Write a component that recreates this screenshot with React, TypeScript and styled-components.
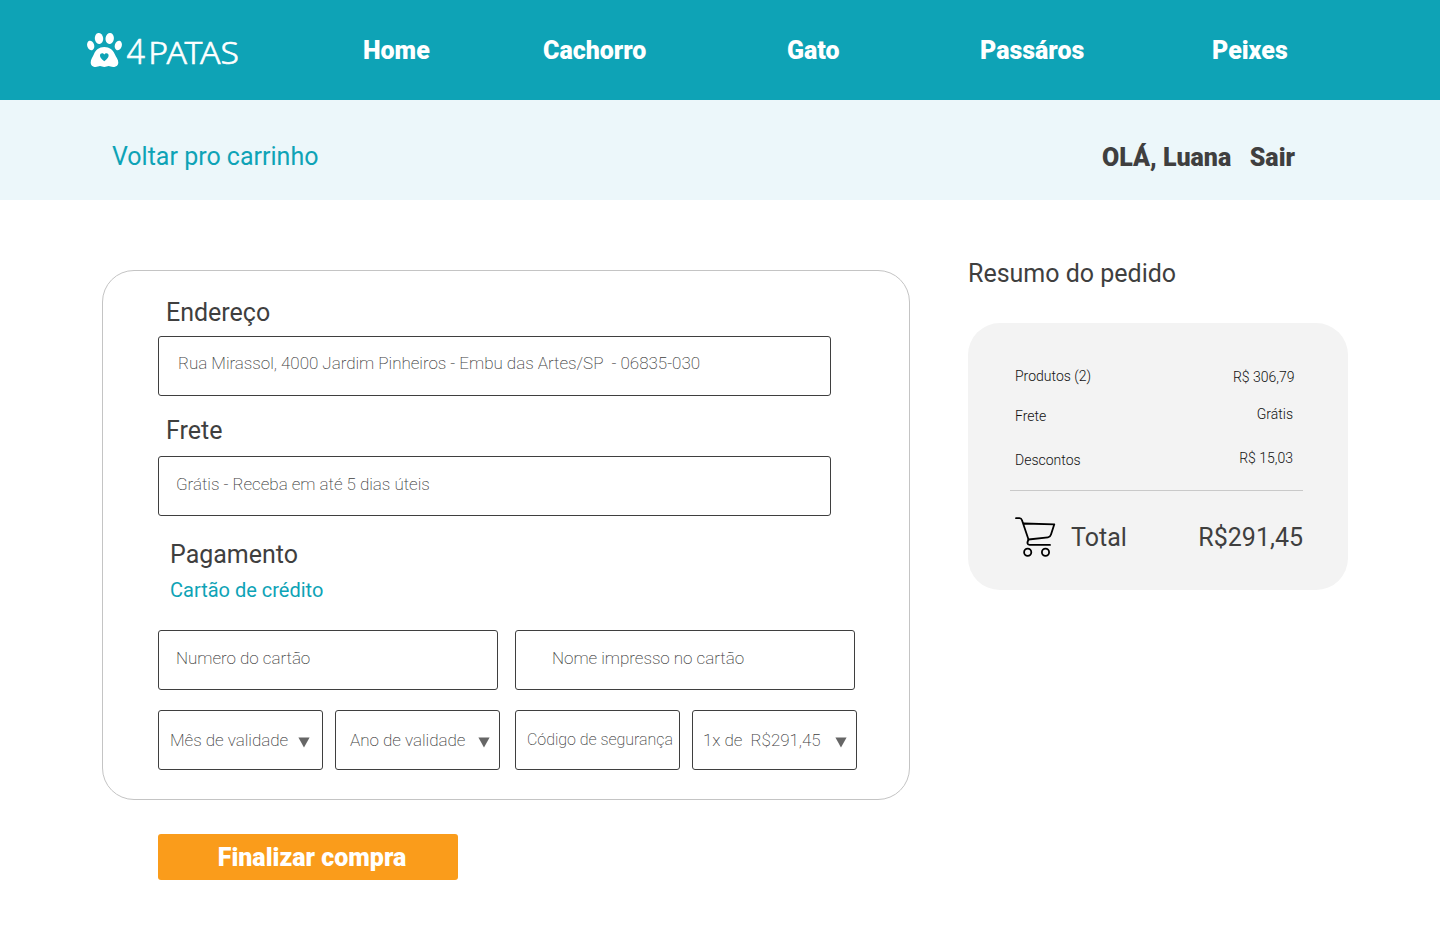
import React from "react";
import styled, { createGlobalStyle } from "styled-components";

const GlobalStyle = createGlobalStyle`
  * { box-sizing: border-box; }
  body {
    margin: 0;
    background: #fff;
    color: #3f3f3f;
    font-family: Roboto, "Liberation Sans", sans-serif;
  }
`;

const Header = styled.header`
  height: 100px;
  padding-left: 86px;
  display: flex;
  align-items: center;
  background: #0ea3b6;
`;

const LogoSvg = styled.svg`
  display: block;
  width: 154px;
  height: 40px;
  flex: none;
  overflow: visible;
`;

const Nav = styled.nav`
  margin-left: 123px;
  padding-top: 2px;
  display: grid;
  grid-template-columns: 180px 244px 193px 232px auto;
`;

const NavLink = styled.a`
  color: #fff;
  font-size: 25px;
  line-height: 30px;
  font-weight: 900;
`;

const SubHeader = styled.div`
  height: 100px;
  padding: 14px 145px 0 112px;
  display: flex;
  align-items: center;
  background: #ecf7fa;
`;

const BackLink = styled.a`
  margin-right: auto;
  color: #0ea3b6;
  font-size: 25px;
  line-height: 30px;
`;

const UserText = styled.span`
  padding-top: 2px;
  margin-left: 18.5px;
  font-size: 25px;
  line-height: 30px;
  font-weight: 900;
`;

const Main = styled.main`
  display: flex;
  align-items: flex-start;
  padding-left: 102px;
`;

const Checkout = styled.section`
  width: 808px;
  margin-top: 70px;
`;

const FormCard = styled.form`
  height: 530px;
  padding: 27px 0 0 55px;
  border: 1px solid #c4c4c4;
  border-radius: 32px;
`;

const Heading = styled.h2<{ $top?: number; $left?: number }>`
  margin: ${(p) => p.$top ?? 0}px 0 0 ${(p) => p.$left ?? 0}px;
  font-size: 25px;
  line-height: 30px;
  font-weight: 400;
`;

const Method = styled.p`
  margin: 8px 0 28px 12px;
  color: #0ea3b6;
  font-size: 20px;
  line-height: 24px;
`;

const FieldRow = styled.div<{ $columns: string }>`
  display: grid;
  grid-template-columns: ${(p) => p.$columns};
  margin-bottom: 20px;
`;

const Field = styled.div<{ $top?: number; $indent: number; $rise?: number; $size?: number }>`
  width: ${(p) => (p.$top === undefined ? "auto" : "673px")};
  height: 60px;
  margin-top: ${(p) => p.$top ?? 0}px;
  padding: 0 0 ${(p) => p.$rise ?? 0}px ${(p) => p.$indent}px;
  display: flex;
  align-items: center;
  border: 1px solid #3f3f3f;
  border-radius: 3px;
  font-size: ${(p) => p.$size ?? 17}px;
  line-height: 20px;
  font-weight: 200;
  letter-spacing: -0.035px;
  white-space: pre;
`;

const Arrow = styled.svg<{ $right: number }>`
  width: 12px;
  height: 11px;
  margin: 4px ${(p) => p.$right}px 0 auto;
  flex: none;
  fill: #666;
`;

const SubmitButton = styled.button`
  display: block;
  width: 300px;
  height: 46px;
  margin: 34px 0 0 56px;
  padding: 2px 0 0 8px;
  border: 0;
  border-radius: 3px;
  background: #fa9c1b;
  color: #fff;
  font: 900 25px/30px Roboto, "Liberation Sans", sans-serif;
`;

const Summary = styled.aside`
  width: 380px;
  margin: 59px 0 0 58px;
`;

const SummaryCard = styled.div`
  height: 267px;
  margin-top: 34px;
  padding: 45px 45px 0 42px;
  border-radius: 32px;
  background: #f3f3f3;
`;

const SummaryRow = styled.div<{ $height: number }>`
  height: ${(p) => p.$height}px;
  padding-left: 5px;
  display: flex;
  justify-content: space-between;
  align-items: flex-start;
  color: #111;
  font-size: 14px;
  line-height: 16px;
  font-weight: 300;
`;

const Amount = styled.span<{ $shift: number; $inset: number }>`
  margin: ${(p) => p.$shift}px ${(p) => p.$inset}px 0 0;
`;

const TotalRow = styled.div`
  padding: 25px 0 0 4px;
  display: flex;
  align-items: center;
  border-top: 1px solid #c9c9c9;
  font-size: 25px;
  line-height: 30px;
`;

const CartSvg = styled.svg`
  width: 42px;
  height: 42px;
  margin-right: 15px;
`;

const TotalLabel = styled.span`
  padding-top: 2px;
`;

const TotalValue = styled(TotalLabel)`
  margin-left: auto;
`;

const Logo = () => (
  <LogoSvg viewBox="0 0 154 40" fill="#fff" aria-label="4 Patas">
    <ellipse cx="4.7" cy="15.5" rx="3.5" ry="4.9" transform="rotate(-17 4.7 15.5)" />
    <ellipse cx="13" cy="8.5" rx="4.2" ry="5.5" transform="rotate(-7 13 8.5)" />
    <ellipse cx="23.7" cy="8.5" rx="4.2" ry="5.5" transform="rotate(7 23.7 8.5)" />
    <ellipse cx="32.3" cy="15.5" rx="3.5" ry="4.9" transform="rotate(17 32.3 15.5)" />
    <path
      fillRule="evenodd"
      d="M18.3 17C13 17 9.7 20 8 24C6.7 27 4.7 29.5 4.7 32.5C4.7 35.5 7 37 9.5 37C11.5 37 12.7 36 14 36C15.5 36 16.5 37 18.3 37C20.1 37 21.2 36 22.7 36C24 36 25.2 37 27.2 37C30 37 32.3 35.5 32.3 32.5C32.3 29.5 30 27 28.7 24C27 20 23.6 17 18.3 17ZM18.3 31.2C15.5 29 14 27.4 14 25.4C14 23 17 22.2 18.3 24.5C19.6 22.2 22.6 23 22.6 25.4C22.6 27.4 21 29 18.3 31.2Z"
    />
    <g fontFamily="'Noto Sans', sans-serif" fontWeight="300" stroke="#fff" strokeWidth="0.6">
      <text x="40.4" y="33.5" fontSize="35.5" textLength="18.5" lengthAdjust="spacingAndGlyphs">4</text>
      <text x="62.3" y="33.5" fontSize="30.5" textLength="90.5" lengthAdjust="spacingAndGlyphs">PATAS</text>
    </g>
  </LogoSvg>
);

const CartIcon = () => (
  <CartSvg viewBox="0 0 42 42" fill="none" stroke="#000" strokeWidth="1.8" strokeLinecap="round" strokeLinejoin="round">
    <path d="M2 2.2H5.5Q7.3 2.2 8 4.2L14.5 23.5L34 21.3Q36.3 21 37 18.6L40.3 8.3L9.8 7.5" />
    <path d="M14.5 23.5Q12 28.7 15.5 28.9H36" />
    <circle cx="13.7" cy="36.3" r="3.6" />
    <circle cx="31.5" cy="36.3" r="3.6" />
  </CartSvg>
);

const DropArrow = ({ right }: { right: number }) => (
  <Arrow viewBox="0 0 12 11" $right={right}>
    <path d="M0.4 0.5H11.6L6 10.5Z" />
  </Arrow>
);

export default function App() {
  return (
    <>
      <GlobalStyle />
      <Header>
        <Logo />
        <Nav>
          {["Home", "Cachorro", "Gato", "Passáros", "Peixes"].map((name) => (
            <NavLink key={name}>{name}</NavLink>
          ))}
        </Nav>
      </Header>
      <SubHeader>
        <BackLink>Voltar pro carrinho</BackLink>
        <UserText>OLÁ, Luana</UserText>
        <UserText>Sair</UserText>
      </SubHeader>
      <Main>
        <Checkout>
          <FormCard>
            <Heading $left={8}>Endereço</Heading>
            <Field $top={8} $indent={19} $rise={6}>Rua Mirassol, 4000 Jardim Pinheiros - Embu das Artes/SP  - 06835-030</Field>
            <Heading $top={20} $left={8}>Frete</Heading>
            <Field $top={10} $indent={17} $rise={4}>Grátis - Receba em até 5 dias úteis</Field>
            <Heading $top={24} $left={12}>Pagamento</Heading>
            <Method>Cartão de crédito</Method>
            <FieldRow $columns="340px 17px 340px">
              <Field $indent={17} $rise={4}>Numero do cartão</Field>
              <span />
              <Field $indent={36} $rise={4}>Nome impresso no cartão</Field>
            </FieldRow>
            <FieldRow $columns="165px 12px 165px 15px 165px 12px 165px">
              <Field $indent={11}>Mês de validade<DropArrow right={12.5} /></Field>
              <span />
              <Field $indent={14}>Ano de validade<DropArrow right={9.5} /></Field>
              <span />
              <Field $indent={11} $size={16}>Código de segurança</Field>
              <span />
              <Field $indent={10}>1x de  R$291,45<DropArrow right={9.5} /></Field>
            </FieldRow>
          </FormCard>
          <SubmitButton type="button">Finalizar compra</SubmitButton>
        </Checkout>
        <Summary>
          <Heading>Resumo do pedido</Heading>
          <SummaryCard>
            <SummaryRow $height={40}>
              Produtos (2)<Amount $shift={1} $inset={8.5}>R$ 306,79</Amount>
            </SummaryRow>
            <SummaryRow $height={44}>
              Frete<Amount $shift={-2} $inset={10}>Grátis</Amount>
            </SummaryRow>
            <SummaryRow $height={38}>
              Descontos<Amount $shift={-2} $inset={10}>R$ 15,03</Amount>
            </SummaryRow>
            <TotalRow>
              <CartIcon />
              <TotalLabel>Total</TotalLabel>
              <TotalValue>R$291,45</TotalValue>
            </TotalRow>
          </SummaryCard>
        </Summary>
      </Main>
    </>
  );
}
